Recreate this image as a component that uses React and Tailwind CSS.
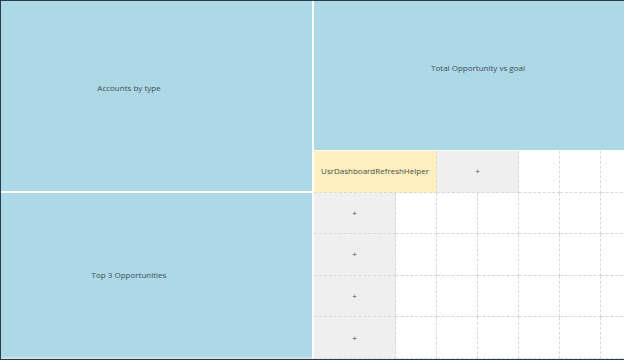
import React from 'react';

const tileText = "font-['Open_Sans',sans-serif] text-[8px] text-[#3d4e58]";

function Cell({ className = '', children }) {
  return (
    <div className={`flex items-center justify-center border-r border-b border-dashed border-[#d9d9d9] ${className}`}>
      {children}
    </div>
  );
}

function Plus() {
  return <span className="font-['Open_Sans',sans-serif] text-[8px] leading-none text-[#4a4a4a]">+</span>;
}

export default function App() {
  const rows = [1, 2, 3, 4];

  return (
    <div className="w-[624px] h-[360px] bg-white border-t border-l border-b border-[#24404f] flex gap-[2px] overflow-hidden">
      {/* left column */}
      <div className="w-[311px] flex flex-col gap-[2px] shrink-0">
        <div className={`h-[190px] bg-[#add8e6] flex items-center justify-center pr-[55px] pb-[16px] ${tileText}`}>
          Accounts by type
        </div>
        <div className={`flex-1 bg-[#add8e6] flex items-center justify-center pr-[55px] border-b-2 border-[#d6dde1] ${tileText}`}>
          Top 3 Opportunities
        </div>
      </div>

      {/* right column */}
      <div className="flex-1 flex flex-col gap-[1px] min-w-0">
        <div className={`h-[149px] bg-[#add8e6] flex items-center justify-center pl-[18px] pb-[16px] ${tileText}`}>
          Total Opportunity vs goal
        </div>
        <div className="flex-1 grid grid-cols-[repeat(8,41px)] grid-rows-5">
          <Cell className={`col-span-3 bg-[#fff0c1] ${tileText} text-[#4a4a3e]`}>UsrDashboardRefreshHelper</Cell>
          <Cell className="col-span-2 bg-[#efefef]"><Plus /></Cell>
          <Cell />
          <Cell />
          <Cell />
          {rows.map((r) => (
            <React.Fragment key={r}>
              <Cell className="col-span-2 bg-[#efefef]"><Plus /></Cell>
              <Cell />
              <Cell />
              <Cell />
              <Cell />
              <Cell />
              <Cell />
            </React.Fragment>
          ))}
        </div>
      </div>
    </div>
  );
}
